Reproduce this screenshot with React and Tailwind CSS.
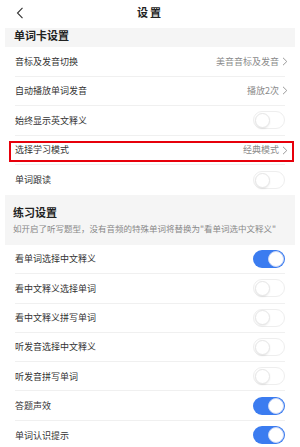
import React from "react";

const font = { fontFamily: '"Noto Sans CJK SC", "Noto Sans", sans-serif' };

function Toggle({ on }) {
  return on ? (
    <div className="w-[32px] h-[18px] rounded-full bg-[#3b7cf0] flex items-center justify-end pr-[1px]">
      <div className="w-[16px] h-[16px] rounded-full bg-white border border-[#c9d6f5]" />
    </div>
  ) : (
    <div className="w-[32px] h-[18px] rounded-full bg-white border border-[#eeeeee] flex items-center pl-[1px]">
      <div className="w-[15px] h-[15px] rounded-full bg-white border border-[#e6e6e6] shadow-[0_1px_2px_rgba(0,0,0,0.08)]" />
    </div>
  );
}

function Chevron() {
  return (
    <svg width="6" height="9" viewBox="0 0 6 9" className="ml-[3px]">
      <path d="M1 0.8 L4.8 4.5 L1 8.2" fill="none" stroke="#9a9a9a" strokeWidth="1" />
    </svg>
  );
}

function Row({ label, value, toggle, height, last, boxed }) {
  return (
    <div className="relative px-[15px]" style={{ height }}>
      <div className={`h-full flex items-center justify-between ${last ? "" : "border-b border-[#f0f0f0]"}`}>
        <span className="text-[9px] text-[#333333]">{label}</span>
        {value ? (
          <span className="flex items-center text-[9px] text-[#8a8a8a] mr-[-3px]">
            {value}
            <Chevron />
          </span>
        ) : (
          <Toggle on={toggle} />
        )}
      </div>
      {boxed && (
        <div className="absolute left-[9px] right-[6px] top-[5px] bottom-[3px] border-2 border-red-600" />
      )}
    </div>
  );
}

export default function App() {
  const cardRows = [
    { label: "音标及发音切换", value: "美音音标及发音" },
    { label: "自动播放单词发音", value: "播放2次" },
    { label: "始终显示英文释义", toggle: false },
    { label: "选择学习模式", value: "经典模式", boxed: true },
    { label: "单词跟读", toggle: false, last: true },
  ];
  const practiceRows = [
    { label: "看单词选择中文释义", toggle: true },
    { label: "看中文释义选择单词", toggle: false },
    { label: "看中文释义拼写单词", toggle: false },
    { label: "听发音选择中文释义", toggle: false },
    { label: "听发音拼写单词", toggle: false },
    { label: "答题声效", toggle: true },
    { label: "单词认识提示", toggle: true },
  ];

  return (
    <div className="w-[300px] h-[447px] bg-white overflow-hidden" style={font}>
      <div className="h-[28px] relative flex items-center justify-center">
        <svg width="8" height="12" viewBox="0 0 8 12" className="absolute left-[16px] top-[7px]">
          <path d="M6.5 0.8 L1.5 6 L6.5 11.2" fill="none" stroke="#333" strokeWidth="1.1" />
        </svg>
        <span className="text-[11px] font-bold text-[#222] tracking-[2px] mt-[-3px]">设置</span>
      </div>
      <div className="mx-[5px] h-[19px] bg-[#f5f5f5] px-[9px] pt-[0px]">
        <div className="text-[11px] font-bold text-[#222] leading-[15px]">单词卡设置</div>
      </div>
      {cardRows.map((r) => (
        <Row key={r.label} {...r} height="29.6px" />
      ))}
      <div className="mx-[5px] h-[50px] bg-[#f5f5f5] px-[8px] pt-[9px]">
        <div className="text-[11px] font-bold text-[#222] leading-[16px]">练习设置</div>
        <div className="text-[8.5px] text-[#888] leading-[12px] mt-[2px] whitespace-nowrap">
          如开启了听写题型，没有音频的特殊单词将替换为"看单词选中文释义"
        </div>
      </div>
      {practiceRows.map((r, i) => (
        <Row key={r.label} {...r} height="29.3px" last={i === practiceRows.length - 1} />
      ))}
    </div>
  );
}
